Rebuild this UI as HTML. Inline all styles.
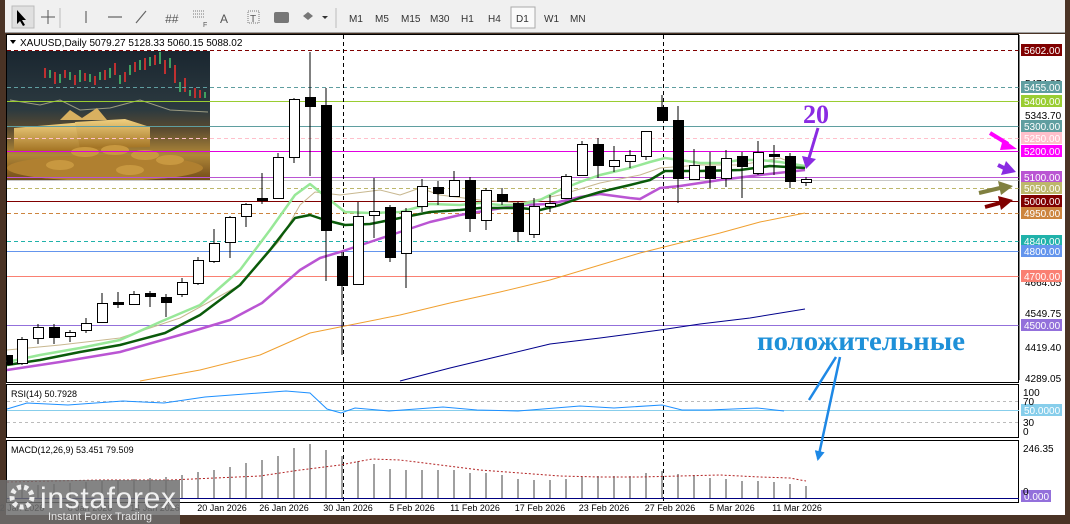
<!DOCTYPE html><html><head><meta charset="utf-8"><style>
body{margin:0;width:1070px;height:524px;overflow:hidden;background:#4a3325;font-family:"Liberation Sans",sans-serif}
svg{position:absolute;left:0;top:0}
</style></head><body>
<svg width="1070" height="524" viewBox="0 0 1070 524" xmlns="http://www.w3.org/2000/svg" font-family="Liberation Sans, sans-serif">
<defs>
<linearGradient id="img" x1="0" y1="0" x2="0" y2="1"><stop offset="0" stop-color="#1a2630"/><stop offset=".45" stop-color="#2c3a40"/><stop offset=".6" stop-color="#5a4a30"/><stop offset=".8" stop-color="#b08838"/><stop offset="1" stop-color="#704818"/></linearGradient>
<linearGradient id="gold" x1="0" y1="0" x2="0" y2="1"><stop offset="0" stop-color="#f0d080"/><stop offset="1" stop-color="#a07020"/></linearGradient>
<marker id="ab" viewBox="0 0 10 10" refX="8" refY="5" markerWidth="4" markerHeight="4" orient="auto"><path d="M0,0L10,5L0,10z" fill="#1e88e5"/></marker>
</defs>
<!-- toolbar -->
<rect x="5" y="0" width="1060" height="33" fill="#f0f0f0"/>
<rect x="5" y="32" width="1060" height="1" fill="#a0a0a0"/>
<rect x="12" y="6" width="22" height="22" fill="#e0e0e0" stroke="#bbb"/>
<path d="M17,10l0,14l3,-3l3,5l2,-1l-3,-5l4,0z" fill="#000"/>
<path d="M48,10v14M41,17h14" stroke="#555"/>
<path d="M60,8v20" stroke="#bbb"/>
<path d="M86,11v12M108,17h14M136,23l10,-12" stroke="#666" stroke-width="1.2"/>
<text x="165" y="23" font-size="12" fill="#555" font-style="italic">##</text>
<path d="M193,11h12M193,14h12M193,17h12" stroke="#777" stroke-dasharray="1,1"/><text x="203" y="27" font-size="7" fill="#555">F</text>
<text x="220" y="23" font-size="12" fill="#555">A</text>
<rect x="248" y="11" width="11" height="12" fill="none" stroke="#777" stroke-dasharray="1,1"/><text x="250" y="22" font-size="10" fill="#555">T</text>
<rect x="274" y="12" width="15" height="11" rx="2" fill="#777"/>
<path d="M308,12l5,4l-5,4l-5,-4z" fill="#777"/><path d="M322,16l3,3l3,-3z" fill="#333"/>
<path d="M336,8v20" stroke="#bbb"/>
<g font-size="10" fill="#333">
<text x="349" y="22">M1</text><text x="375" y="22">M5</text><text x="401" y="22">M15</text><text x="430" y="22">M30</text><text x="461" y="22">H1</text><text x="488" y="22">H4</text>
<rect x="511" y="7" width="24" height="21" fill="#fafafa" stroke="#aaa"/><text x="516" y="22">D1</text><text x="544" y="22">W1</text><text x="570" y="22">MN</text></g>
<!-- chart bg -->
<rect x="6" y="34" width="1059" height="481" fill="#fff"/>
<rect x="0" y="0" width="5" height="524" fill="#4a3325"/>
<rect x="0" y="515" width="1070" height="9" fill="#4a3325"/>
<rect x="1065" y="0" width="5" height="524" fill="#4a3325"/>
<rect x="6.5" y="34.5" width="1012" height="348" fill="none" stroke="#000"/>
<rect x="6.5" y="384.5" width="1012" height="53" fill="none" stroke="#000"/>
<rect x="6.5" y="440.5" width="1012" height="62" fill="none" stroke="#000"/>
<!-- image -->
<rect x="7" y="51" width="203" height="130" fill="url(#img)"/>
<g stroke-width="2">
<path d="M45,68v10M55,72v12M65,70v8M75,75v10M85,73v8M95,76v9M105,70v10M115,63v12M125,72v10M135,62v10M145,58v12M155,55v10M165,60v14M175,65v18M185,78v14M195,88v10M200,90v8" stroke="#c03030"/>
<path d="M50,70v8M60,74v9M70,72v8M80,70v12M90,74v8M100,72v8M110,68v10M120,75v9M130,65v10M140,60v10M150,57v9M160,52v12M170,58v10M180,82v10M190,90v6M205,92v6" stroke="#40a060"/>
</g>
<polyline points="10,100 40,105 60,100 80,110 110,108 140,100 170,110 208,112" fill="none" stroke="#9a9a80" stroke-width="1"/>
<path d="M14,128l70,-6l20,6v22l-90,2z" fill="url(#gold)"/>
<path d="M75,122l50,-3l25,8v20l-70,2z" fill="url(#gold)"/>
<path d="M60,120l10,-10l12,8l15,-10l10,12z" fill="#d8b060"/>
<ellipse cx="105" cy="168" rx="98" ry="13" fill="#b08030"/>
<g fill="#c89840"><ellipse cx="85" cy="152" rx="14" ry="5"/><ellipse cx="115" cy="150" rx="14" ry="5"/><ellipse cx="145" cy="155" rx="14" ry="5"/><ellipse cx="170" cy="160" rx="14" ry="5"/><ellipse cx="60" cy="165" rx="14" ry="5"/><ellipse cx="130" cy="170" rx="14" ry="5"/></g>
<!-- horizontal lines -->
<g fill="none" stroke-width="1">
<path d="M7,50.5H1019" stroke="#800000" stroke-dasharray="4,3"/>
<path d="M7,87.5H1019" stroke="#5f9ea0" stroke-dasharray="4,3"/>
<path d="M7,101.5H1019" stroke="#9acd32"/>
<path d="M7,126.5H1019" stroke="#5f9ea0"/>
<path d="M7,138.5H1019" stroke="#ffc0cb" stroke-dasharray="4,3"/>
<path d="M7,151.5H1019" stroke="#e000e0"/>
<path d="M7,177.5H1019" stroke="#ba55d3"/>
<path d="M7,180.5H1019" stroke="#c8c8c8"/>
<path d="M7,188.5H1019" stroke="#bdb76b" stroke-dasharray="4,3"/>
<path d="M7,201.5H1019" stroke="#800000"/>
<path d="M7,213.5H1019" stroke="#cd853f" stroke-dasharray="4,3"/>
<path d="M7,241.5H1019" stroke="#20b2aa" stroke-dasharray="4,3"/>
<path d="M7,251.5H1019" stroke="#6495ed"/>
<path d="M7,276.5H1019" stroke="#fa8072"/>
<path d="M7,325.5H1019" stroke="#9370db"/>
<path d="M343.5,35V502M663.5,35V502" stroke="#000" stroke-dasharray="4,3"/>
</g>
<!-- MAs -->
<g fill="none" stroke-linejoin="round">
<polyline stroke="#f0a030" points="140,381 200,370 260,355 310,333 350,325 400,315 450,303 500,292 550,280 600,265 640,253 680,243 720,233 760,222 805,213"/>
<polyline stroke="#00008b" points="400,381 450,368 500,356 550,344 600,338 660,330 700,324 750,318 805,309"/>
<polyline stroke="#c8b890" points="7,350 60,345 120,338 180,318 240,285 280,240 300,205 315,192 340,195 380,190 400,195 420,188 440,195 480,200 520,203 560,195 600,183 640,175 660,168 700,165 740,165 780,158 805,168"/>
<polyline stroke="#ba55d3" stroke-width="2.5" points="7,370 60,362 120,352 180,335 230,320 262,303 300,270 320,258 340,252 370,242 400,232 430,222 460,215 490,210 520,205 550,204 580,197 600,194 630,198 640,199 660,188 680,186 720,180 760,175 805,170"/>
<polyline stroke="#98e898" stroke-width="2.5" points="7,362 40,355 80,348 120,340 160,322 200,305 240,270 270,230 295,195 310,184 330,200 345,212 370,213 400,212 430,204 460,205 480,203 500,205 520,205 540,200 560,190 580,182 600,175 630,168 650,162 665,158 680,160 700,163 720,163 740,160 760,160 780,162 805,166"/>
<polyline stroke="#0a5a0a" stroke-width="2.5" points="7,365 40,360 80,352 120,345 165,333 200,315 240,285 270,250 295,218 310,215 325,220 345,225 370,224 400,218 430,212 460,210 480,208 500,208 520,208 540,210 560,205 580,198 600,192 630,185 650,180 665,171 700,171 740,170 770,166 805,168"/>
</g>
<!-- candles -->
<g stroke="#000" stroke-width="1">
<path d="M22,337V365M38,324V344M54,324V344M70,330V342M86,318V333M102,293V323M118,292V308M134,291V304M150,291V307M166,294V317M182,278V297M198,257V285M214,229V263M230,216V258M246,203V227M262,173V204M278,153V198M294,98V163M310,52V176M326,88V281M342,252V355M358,202V285M374,178V238M390,205V262M406,208V288M422,179V212M438,181V205M454,171V197M470,177V232M486,188V230M502,188V205M518,202V242M534,198V238M550,195V212M566,174V198M582,141V175M598,138V178M614,146V172M630,150V168M646,131V160M662,95V121M678,106V203M694,149V180M710,152V188M726,150V187M742,152V198M758,141V175M774,145V175M790,153V188M806,177V186"/>
</g>
<g stroke="#000" fill="#fff">
<rect x="17.5" y="339.5" width="10" height="24"/><rect x="33.5" y="327.5" width="10" height="11"/><rect x="65.5" y="332.5" width="10" height="4"/><rect x="81.5" y="323.5" width="10" height="7"/><rect x="97.5" y="303.5" width="10" height="19"/><rect x="129.5" y="294.5" width="10" height="10"/><rect x="177.5" y="282.5" width="10" height="12"/><rect x="193.5" y="260.5" width="10" height="23"/><rect x="209.5" y="243.5" width="10" height="18"/><rect x="225.5" y="217.5" width="10" height="25"/><rect x="241.5" y="204.5" width="10" height="12"/><rect x="273.5" y="157.5" width="10" height="41"/><rect x="289.5" y="99.5" width="10" height="58"/><rect x="353.5" y="216.5" width="10" height="68"/><rect x="369.5" y="211.5" width="10" height="4"/><rect x="401.5" y="211.5" width="10" height="42"/><rect x="417.5" y="186.5" width="10" height="20"/><rect x="449.5" y="180.5" width="10" height="16"/><rect x="481.5" y="190.5" width="10" height="30"/><rect x="529.5" y="206.5" width="10" height="28"/><rect x="545.5" y="203.5" width="10" height="3"/><rect x="561.5" y="176.5" width="10" height="22"/><rect x="577.5" y="144.5" width="10" height="31"/><rect x="609.5" y="160.5" width="10" height="6"/><rect x="625.5" y="155.5" width="10" height="6"/><rect x="641.5" y="131.5" width="10" height="25"/><rect x="689.5" y="165.5" width="10" height="14"/><rect x="721.5" y="158.5" width="10" height="20"/><rect x="753.5" y="152.5" width="10" height="21"/><rect x="801.5" y="179.5" width="10" height="3"/>
</g>
<g fill="#000">
<rect x="7" y="355" width="6" height="10"/><rect x="49" y="327" width="11" height="11"/><rect x="113" y="302" width="11" height="3"/><rect x="145" y="293" width="11" height="4"/><rect x="161" y="297" width="11" height="6"/><rect x="257" y="198" width="11" height="3"/><rect x="305" y="97" width="11" height="10"/><rect x="321" y="105" width="11" height="126"/><rect x="337" y="256" width="11" height="30"/><rect x="385" y="207" width="11" height="51"/><rect x="433" y="187" width="11" height="7"/><rect x="465" y="180" width="11" height="39"/><rect x="497" y="194" width="11" height="8"/><rect x="513" y="203" width="11" height="29"/><rect x="593" y="144" width="11" height="22"/><rect x="657" y="107" width="11" height="14"/><rect x="673" y="120" width="11" height="59"/><rect x="705" y="166" width="11" height="13"/><rect x="737" y="156" width="11" height="11"/><rect x="769" y="154" width="11" height="3"/><rect x="785" y="156" width="11" height="26"/>
</g>
<!-- legend -->
<path d="M10,40l3,4l3,-4z" fill="#000"/>
<text x="20" y="46" font-size="10" fill="#000">XAUUSD,Daily  5079.27 5128.33 5060.15 5088.02</text>
<!-- price axis -->
<g font-size="10">
<path d="M1019,380V35" stroke="#000"/>
<text x="1025" y="87" fill="#000">5474.85</text><text x="1025" y="119" fill="#000">5343.70</text><text x="1025" y="286" fill="#000">4664.05</text><text x="1025" y="317" fill="#000">4549.75</text><text x="1025" y="351" fill="#000">4419.40</text><text x="1025" y="382" fill="#000">4289.05</text>
<g fill="#fff">
<rect x="1021" y="44" width="41" height="12" fill="#800000"/><text x="1024" y="54">5602.00</text>
<rect x="1021" y="81" width="41" height="12" fill="#5f9ea0"/><text x="1024" y="91">5455.00</text>
<rect x="1021" y="95" width="41" height="12" fill="#9acd32"/><text x="1024" y="105">5400.00</text>
<rect x="1021" y="120" width="41" height="12" fill="#5f9ea0"/><text x="1024" y="130">5300.00</text>
<rect x="1021" y="132" width="41" height="12" fill="#ffc0cb"/><text x="1024" y="142">5250.00</text>
<rect x="1021" y="145" width="41" height="12" fill="#ff00ff"/><text x="1024" y="155">5200.00</text>
<rect x="1021" y="171" width="41" height="12" fill="#ba55d3"/><text x="1024" y="181">5100.00</text>
<rect x="1021" y="182" width="41" height="12" fill="#bdb76b"/><text x="1024" y="192">5050.00</text>
<rect x="1021" y="195" width="41" height="12" fill="#800000"/><text x="1024" y="205">5000.00</text>
<rect x="1021" y="207" width="41" height="12" fill="#cd853f"/><text x="1024" y="217">4950.00</text>
<rect x="1021" y="235" width="41" height="12" fill="#20b2aa"/><text x="1024" y="245">4840.00</text>
<rect x="1021" y="245" width="41" height="12" fill="#6495ed"/><text x="1024" y="255">4800.00</text>
<rect x="1021" y="270" width="41" height="12" fill="#fa8072"/><text x="1024" y="280">4700.00</text>
<rect x="1021" y="319" width="41" height="12" fill="#9370db"/><text x="1024" y="329">4500.00</text>
<rect x="1021" y="404" width="41" height="12" fill="#87ceeb"/><text x="1024" y="414">50.0000</text>
<rect x="1021" y="490" width="30" height="12" fill="#9370db"/><text x="1024" y="500">0.000</text>
</g>
<text x="1023" y="396" fill="#000">100</text><text x="1023" y="405" fill="#000">70</text><text x="1023" y="426" fill="#000">30</text><text x="1023" y="435" fill="#000">0</text>
<text x="1023" y="452" fill="#000">246.35</text><text x="1023" y="495" fill="#000">0</text>
</g>
<!-- RSI -->
<path d="M7,401.5H1019M7,422.5H1019" stroke="#bbb" stroke-dasharray="3,3"/>
<path d="M7,410.5H1019" stroke="#87ceeb"/>
<polyline fill="none" stroke="#1e90ff" points="7,409 27,403 68,405 123,401 164,403 205,397 286,391 310,393 327,409 341,413 355,408 389,411 443,407 477,410 518,411 580,406 614,408 662,405 682,410 709,410 757,408 784,411"/>
<text x="11" y="397" font-size="9" fill="#000">RSI(14) 50.7928</text>
<!-- MACD -->
<path d="M7,498.5H1019" stroke="#000080"/>
<g stroke="#808080" stroke-width="1.5">
<path d="M22,498V486M38,498V485M54,498V484M70,498V483M86,498V482M102,498V481M118,498V480M134,498V479M150,498V478M166,498V477M182,498V475M198,498V472M214,498V470M230,498V467M246,498V463M262,498V460M278,498V456M294,498V448M310,498V444M326,498V450M342,498V456M358,498V461M374,498V464M390,498V469M406,498V470M422,498V470M438,498V470M454,498V470M470,498V473M486,498V473M502,498V475M518,498V479M534,498V480M550,498V480M566,498V479M582,498V477M598,498V476M614,498V476M630,498V476M646,498V473M662,498V471M678,498V474M694,498V475M710,498V478M726,498V479M742,498V481M758,498V481M774,498V482M790,498V484M806,498V486"/>
</g>
<polyline fill="none" stroke="#b22222" stroke-dasharray="2,2" points="7,482 100,480 170,480 260,476 300,470 340,465 372,459 400,460 440,465 480,470 520,473 560,476 600,477 640,477 680,476 720,475 760,477 790,478 806,481"/>
<text x="11" y="453" font-size="9" fill="#000">MACD(12,26,9) 53.451 79.509</text>
<!-- dates -->
<g font-size="9" fill="#000" text-anchor="middle">
<text x="222" y="511">20 Jan 2026</text><text x="284" y="511">26 Jan 2026</text><text x="348" y="511">30 Jan 2026</text><text x="412" y="511">5 Feb 2026</text><text x="475" y="511">11 Feb 2026</text><text x="540" y="511">17 Feb 2026</text><text x="604" y="511">23 Feb 2026</text><text x="670" y="511">27 Feb 2026</text><text x="732" y="511">5 Mar 2026</text><text x="797" y="511">11 Mar 2026</text>
<text x="22" y="511">2 Jan 2026</text><text x="90" y="511">8 Jan 2026</text><text x="155" y="511">14 Jan 2026</text></g>
<!-- logo -->
<rect x="0" y="480" width="180" height="44" fill="#6e6e6e" opacity=".85"/>
<circle cx="22" cy="497" r="10" fill="none" stroke="#eee" stroke-width="5" stroke-dasharray="4,3"/>
<text x="40" y="508" font-size="30" fill="#f0f0f0" textLength="136">instaforex</text>
<text x="48" y="520" font-size="11" fill="#e8e8e8">Instant Forex Trading</text>
<!-- annotations -->
<text x="803" y="123" font-family="Liberation Serif, serif" font-weight="bold" font-size="26" fill="#8a2be2">20</text>
<path d="M818,128L809,158" stroke="#8a2be2" stroke-width="3"/><path d="M802,156l14,3l-10,10z" fill="#8a2be2"/>
<path d="M990,133L1008,144" stroke="#ff00ff" stroke-width="4"/><path d="M1003,139l14,10l-17,1z" fill="#ff00ff"/>
<path d="M998,165L1008,170" stroke="#8a2be2" stroke-width="4"/><path d="M1006,161l10,11l-15,3z" fill="#8a2be2"/>
<path d="M979,193L1000,188" stroke="#808040" stroke-width="4"/><path d="M998,181l15,5l-12,9z" fill="#808040"/>
<path d="M985,207L1000,203" stroke="#800000" stroke-width="4"/><path d="M998,196l15,4l-12,10z" fill="#800000"/>
<text x="757" y="350" font-family="Liberation Serif, serif" font-weight="bold" font-size="27" fill="#1e90d8" textLength="208" lengthAdjust="spacingAndGlyphs">положительные</text>
<path d="M836,357L809,400M840,357L818,459" stroke="#1e88e5" stroke-width="2.5" marker-end="url(#ab)"/>
</svg>
</body></html>
